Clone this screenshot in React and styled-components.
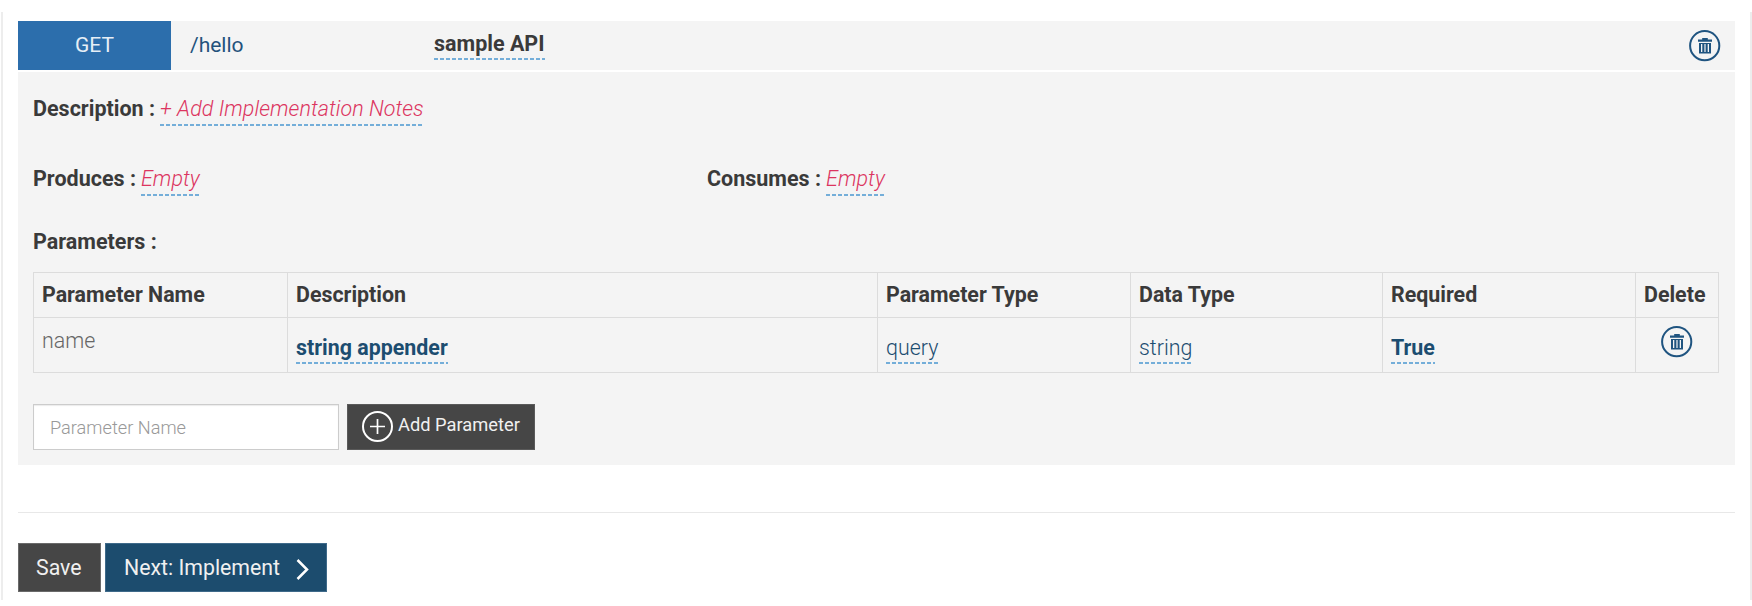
import React from "react";
import styled, { createGlobalStyle } from "styled-components";

const GlobalStyle = createGlobalStyle`
  * { box-sizing: border-box; }
  body { margin: 0; background: #fff; overflow: hidden; }
`;

const Page = styled.main`
  height: 606px;
  padding: 12px 0 6px 1px;
  font-family: Roboto, sans-serif;
  font-size: 21.5px;
  line-height: 24px;
  font-weight: 300;
  color: #3a3a3a;
`;

const Frame = styled.div`
  height: 588px;
  padding: 9px 15px 0 15px;
  border-left: 2px solid #ededed;
  border-right: 2px solid #ededed;
`;

const ResourceBar = styled.header`
  display: flex;
  height: 49px;
  background: #f4f4f4;
`;

const Method = styled.div`
  width: 153px;
  padding-top: 12px;
  text-align: center;
  font-size: 21px;
  font-weight: 400;
  color: #e6eef6;
  background: #2c6eac;
`;

const Path = styled.div`
  width: 263px;
  padding: 12px 0 0 19px;
  font-size: 21px;
  font-weight: 400;
  color: #23527c;
`;

const Summary = styled.div`
  flex: 1;
  padding-top: 11px;
`;

const Editable = styled.a`
  display: inline-block;
  height: ${(p) => p.$h || 28}px;
  background: repeating-linear-gradient(90deg, #74aed9 0 4px, transparent 4px 6px) bottom left / 100% 2px no-repeat;
  font-weight: ${(p) => (p.$strong ? 700 : 300)};
  font-style: ${(p) => (p.$empty ? "italic" : "normal")};
  letter-spacing: ${(p) => (p.$empty ? "0.05px" : "0")};
  color: ${(p) => (p.$dark ? "#3a3a3a" : p.$empty ? "#dc3560" : "#1c4d70")};
  white-space: nowrap;
`;

const BarAction = styled.div`
  padding: 9px 14px 0 0;
`;

const Details = styled.section`
  height: 393px;
  margin-top: 2px;
  padding: 25px 16px 0 15px;
  background: #f4f4f4;
`;

const Field = styled.div`
  display: flex;
  gap: 5px;
  width: ${(p) => p.$w || "auto"};
`;

const FieldRow = styled.div`
  display: flex;
  height: ${(p) => p.$h}px;
`;

const Label = styled.span`
  font-weight: 700;
  white-space: nowrap;
`;

const Table = styled.table`
  width: 1685px;
  table-layout: fixed;
  border-collapse: collapse;
`;

const Cell = styled.td`
  height: ${(p) => p.$h}px;
  padding: ${(p) => p.$pt}px 0 0 8px;
  vertical-align: top;
  text-align: left;
  border: 1px solid #dcdcdc;
  font-size: 21.4px;
  color: #666;
`;

const HeadCell = styled(Cell)`
  font-weight: 700;
  color: #3a3a3a;
  white-space: nowrap;
`;

const CenterCell = styled(Cell)`
  padding-left: 25px;
`;

const AddRow = styled.div`
  display: flex;
  gap: 8px;
  margin-top: 31px;
`;

const NameInput = styled.input`
  width: 306px;
  height: 46px;
  padding: 0 0 0 16px;
  border: 1px solid #ccc;
  border-radius: 0;
  box-shadow: inset 0 1px 1px rgba(0, 0, 0, 0.08);
  background: #fff;
  font: 300 18.2px/24px Roboto, sans-serif;
  &::placeholder { color: #999; opacity: 1; }
`;

const AddButton = styled.button`
  display: flex;
  gap: 4px;
  width: 188px;
  height: 46px;
  padding: 6px 0 0 14px;
  border: 1px solid #5a5a5a;
  background: #464646;
  color: #f0f0f0;
  font: 400 18.3px/28px Roboto, sans-serif;
  white-space: nowrap;
`;

const Divider = styled.hr`
  height: 1px;
  margin: 47px 0 30px;
  border: 0;
  background: #e8e8e8;
`;

const Actions = styled.footer`
  display: flex;
  gap: 4px;
`;

const ActionButton = styled.button`
  display: flex;
  gap: 16px;
  width: ${(p) => p.$w}px;
  height: 49px;
  padding: 12px 0 0 ${(p) => p.$pl}px;
  border: 1px solid ${(p) => (p.$primary ? "#3f6a8a" : "#6a6a6a")};
  background: ${(p) => (p.$primary ? "#1c4c6e" : "#464646")};
  color: #f0f0f0;
  font: 400 21.3px/24px Roboto, sans-serif;
  white-space: nowrap;
`;

const Icon = styled.svg`
  display: block;
  flex: none;
`;

const TrashIcon = () => (
  <Icon width="32" height="32" viewBox="0 0 32 32" fill="none">
    <circle cx="15.700" cy="15.700" r="14.600" stroke="#1f5480" strokeWidth="2" />
    <path fill="#1f5480" d="M13.200 8h5.600v1.500h4.200v2.200H9V9.500h4.200z" />
    <path fill="#1f5480" fillRule="evenodd" d="M10 12.900h12v10.600H10zM12 14v7.900h1.300V14zM15.400 14v7.900h1.200V14zM18.700 14v7.900H20V14z" />
  </Icon>
);

const PlusIcon = () => (
  <Icon width="32" height="32" viewBox="0 0 32 32" fill="none" stroke="#fff">
    <circle cx="15.500" cy="15.500" r="14.500" strokeWidth="2" />
    <path d="M8 15.500h15M15.500 8v15" strokeWidth="1.700" />
  </Icon>
);

const Chevron = () => (
  <Icon width="14" height="24" viewBox="0 0 14 24" fill="none" stroke="#fff" strokeWidth="2.500">
    <path d="M1.500 4l9.500 9.500L1.500 23" />
  </Icon>
);

const columns = [
  ["Parameter Name", 254],
  ["Description", 590],
  ["Parameter Type", 253],
  ["Data Type", 252],
  ["Required", 253],
  ["Delete", 83],
];

export default function App() {
  return (
    <>
      <GlobalStyle />
      <Page>
        <Frame>
          <ResourceBar>
            <Method>GET</Method>
            <Path>/hello</Path>
            <Summary><Editable $strong $dark>sample API</Editable></Summary>
            <BarAction><TrashIcon /></BarAction>
          </ResourceBar>
          <Details>
            <FieldRow $h={70}>
              <Field><Label>Description :</Label><Editable $empty $h={29}>+ Add Implementation Notes</Editable></Field>
            </FieldRow>
            <FieldRow $h={63}>
              <Field $w="674px"><Label>Produces :</Label><Editable $empty $h={29}>Empty</Editable></Field>
              <Field><Label>Consumes :</Label><Editable $empty $h={29}>Empty</Editable></Field>
            </FieldRow>
            <FieldRow $h={42}><Label>Parameters :</Label></FieldRow>
            <Table>
              <colgroup>{columns.map(([name, width]) => <col key={name} width={width} />)}</colgroup>
              <thead>
                <tr>{columns.map(([name]) => <HeadCell as="th" key={name} $h={45} $pt={10}>{name}</HeadCell>)}</tr>
              </thead>
              <tbody>
                <tr>
                  <Cell $h={55} $pt={11}>name</Cell>
                  <Cell $pt={18}><Editable $strong>string appender</Editable></Cell>
                  <Cell $pt={18}><Editable>query</Editable></Cell>
                  <Cell $pt={18}><Editable>string</Editable></Cell>
                  <Cell $pt={18}><Editable $strong>True</Editable></Cell>
                  <CenterCell $pt={8}><TrashIcon /></CenterCell>
                </tr>
              </tbody>
            </Table>
            <AddRow>
              <NameInput placeholder="Parameter Name" />
              <AddButton><PlusIcon />Add Parameter</AddButton>
            </AddRow>
          </Details>
          <Divider />
          <Actions>
            <ActionButton $w={83} $pl={17}>Save</ActionButton>
            <ActionButton $w={222} $pl={18} $primary>Next: Implement<Chevron /></ActionButton>
          </Actions>
        </Frame>
      </Page>
    </>
  );
}
